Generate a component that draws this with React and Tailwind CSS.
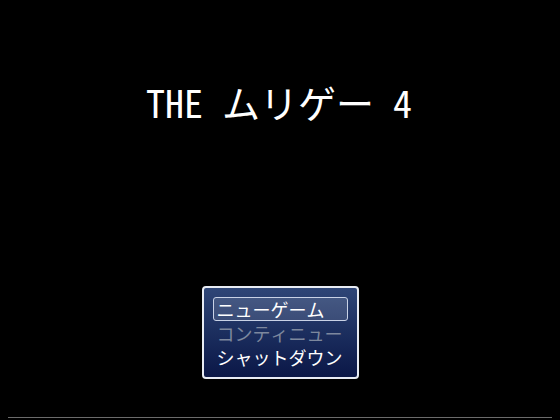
export default function App() {
  const menu = [
    { label: "ニューゲーム", enabled: true, selected: true },
    { label: "コンティニュー", enabled: false },
    { label: "シャットダウン", enabled: true },
  ];

  return (
    <div
      className="w-[560px] h-[420px] bg-black flex flex-col items-center overflow-hidden"
      style={{ fontFamily: '"Noto Sans Mono CJK JP", "Noto Sans CJK JP", sans-serif' }}
    >
      {/* game title */}
      <h1 className="mt-[78px] h-[48px] text-[38px] leading-[48px] text-white font-normal whitespace-pre -ml-[2px]">
        THE ムリゲー 4
      </h1>

      {/* title command window */}
      <div className="mt-[160px] w-[157px] h-[93px] rounded-[4px] border-2 border-[#e8ecf4] bg-gradient-to-b from-[#2f4677] to-[#0b1747] shadow-[0_2px_0_rgba(0,0,0,0.6)] px-[9px] pt-[9px] flex flex-col">
        {menu.map((item) => (
          <div
            key={item.label}
            className={
              "h-[24px] px-[3px] rounded-[3px] text-[18px] leading-[22px] whitespace-nowrap " +
              (item.selected
                ? "border border-[#c9d2e6] bg-[rgba(255,255,255,0.12)] "
                : "border border-transparent ") +
              (item.enabled ? "text-white" : "text-[#7d889e]")
            }
          >
            {item.label}
          </div>
        ))}
      </div>

      {/* bottom rule */}
      <div className="mt-auto mb-[2px] w-[544px] h-px bg-[#6b6b6b]" />
    </div>
  );
}
